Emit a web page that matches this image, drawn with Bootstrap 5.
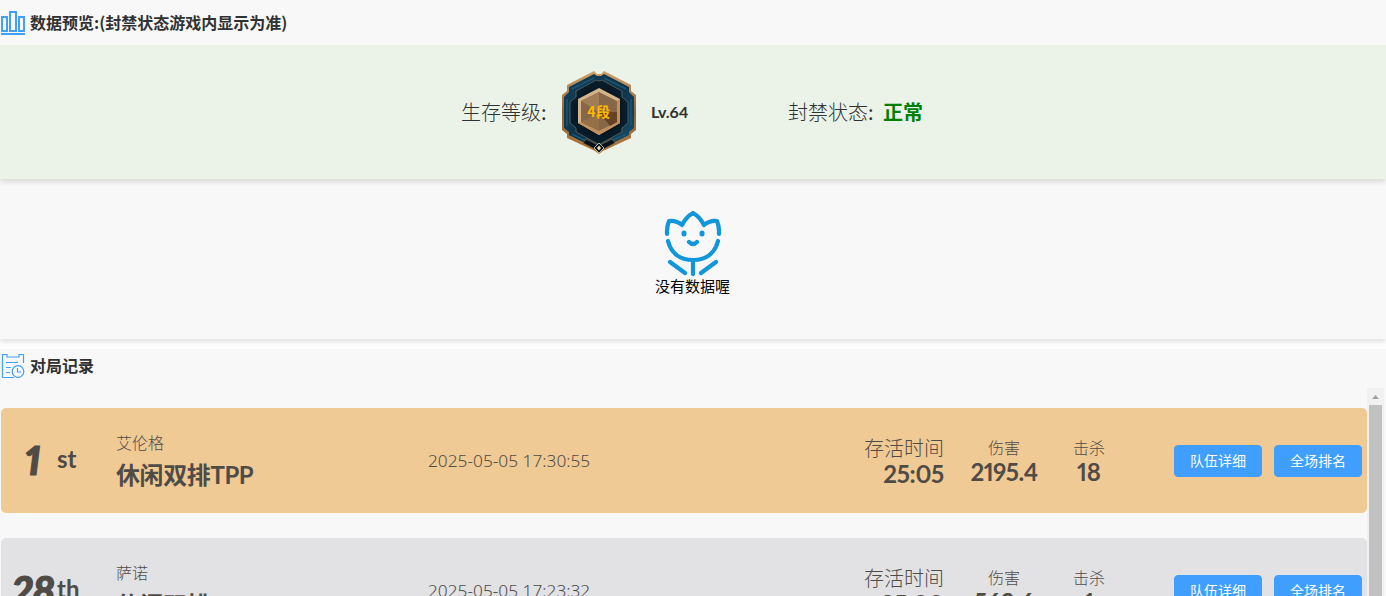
<!DOCTYPE html>
<html lang="zh-CN">
<head>
<meta charset="utf-8">
<title>数据预览</title>
<link href="https://cdn.jsdelivr.net/npm/bootstrap@5.3.0/dist/css/bootstrap.min.css" rel="stylesheet">
<style>
body{height:596px;overflow:hidden;background:#fff;color:#303133;font-family:"Noto Sans","Noto Sans CJK SC",sans-serif;font-size:16px;line-height:1}
.cjk{font-family:"Noto Sans CJK SC",sans-serif;white-space:nowrap}
.geo{font-family:Lato,"Noto Sans CJK SC",sans-serif;font-weight:700;white-space:nowrap;font-variant-numeric:proportional-nums}
.lt{font-weight:300}
.panel{background:#f8f8f8}
.shade{box-shadow:0 3px 5px rgba(0,0,0,.12);position:relative}
.title-bar{height:45px;padding:0 0 0 1px;gap:5px;position:relative;z-index:2}
.title-bar .cjk{font-size:16px;font-weight:700;line-height:24px;padding-bottom:2px}
.status{height:134px;background:#ebf3e8;z-index:1}
.s20{font-size:20px;line-height:24px}
.empty-box{height:160px;padding-top:32px;color:#000}
.empty-box .cjk{font-size:15px;line-height:20px;margin-right:1px}
.records{height:247px;margin-top:10px}
.list-wrap{height:208px}
.match{height:105px;margin-left:1px;border-radius:5px;color:#4f4b47;margin-bottom:25px}
.gold{background:#efca94}
.grey{background:#e2e2e4}
.rank{width:115px;padding-left:8px}
.rank-no{width:48px;font-size:40px;font-weight:900;font-style:italic;line-height:40px;-webkit-text-stroke:1.2px #4f4b47;padding-bottom:1px}
.rank-sfx{font-size:24px;line-height:24px;padding-bottom:4px}
.mode{width:312px;padding-top:4px}
.mode .geo{line-height:42px;letter-spacing:-.4px}
.date{width:400px;font-size:17.300px;font-weight:300;white-space:nowrap;padding-top:1px}
.v24{font-size:24px;line-height:24px;font-weight:700}
.alive{width:116px}
.alive .s20,.alive .v24{line-height:26px}
.alive .v24{letter-spacing:-.3px}
.dmg{width:120px;padding-bottom:3px}
.kill{width:50px;padding-bottom:3px}
.btn-act{width:88px;height:32px;padding:0 0 2px;border-radius:4px;background:#409eff;color:#fff;font-size:14px;line-height:28px;border:1px solid #409eff}
.sbar{width:17px;background:#f1f1f1;margin-right:2px}
.thumb{width:13px;background:#c1c1c1}
</style>
</head>
<body>
<div class="panel title-bar d-flex align-items-center">
<svg width="24" height="24" viewBox="0 0 24 24" fill="none" stroke="#409eff" stroke-width="2"><path d="M1 6H6V20H1ZM9 1H15V20H9ZM18 6H23V20H18ZM0 23H24"/></svg>
<span class="cjk">数据预览:(封禁状态游戏内显示为准)</span>
</div>
<div class="status shade d-flex align-items-center">
<div class="d-flex align-items-center" style="margin-left:461px">
<span class="cjk s20 lt" style="width:99px">生存等级<b>:</b></span>
<svg width="78" height="84" viewBox="0 0 78 84">
<defs>
<linearGradient id="rim" x2="0" y2="1"><stop offset="0" stop-color="#d0a068"/><stop offset=".5" stop-color="#8b663e"/><stop offset="1" stop-color="#b77a39"/></linearGradient>
<linearGradient id="blue" x2="1" y2="1"><stop offset="0" stop-color="#12405a"/><stop offset=".5" stop-color="#0d3349"/><stop offset="1" stop-color="#174f6b"/></linearGradient>
<radialGradient id="dark"><stop offset=".5" stop-color="#041019"/><stop offset="1" stop-color="#08202e"/></radialGradient>
</defs>
<path fill="url(#rim)" d="M34 1L37 4H41L44 1L71 15V21L76 25V60L71 64V68L43 81L39 84L35 81L7 68V64L2 60V25L7 21V15Z"/>
<path fill="url(#blue)" d="M34 4L37 6H41L44 4L69 17V22L74 27V58L69 62V65L39 80L9 65V62L4 58V27L9 22V17Z"/>
<path fill="none" stroke="#1c5673" stroke-width="1.500" d="M12 19L34 8M66 19L44 8M7 29V56M71 29V56M12 64L28 72M66 64L50 72"/>
<path fill="url(#dark)" stroke="#5f6460" stroke-width=".8" d="M36 10L39 11L42 10L62 21V27L68 32V53L62 58V62L40 74H38L16 62V58L10 53V32L16 27V21Z"/>
<path fill="#06131d" stroke="#8b6b44" stroke-width=".7" d="M26 69L38 75V81L23 73ZM52 69L40 75V81L55 73Z"/>
<path fill="#d6b48a" d="M39 18L60 29V53L39 65L18 53V29Z"/>
<path fill="#c48f5d" d="M18 53L39 65L60 53V29L57 31V52L39 61L21 52Z"/>
<path fill="#876747" d="M39 22L57 31V52L39 61L21 52V31Z"/>
<path fill="#a17e57" d="M39 22V42L21 31Z"/><path fill="#644325" d="M39 42L57 42V52L50 56Z"/><path fill="#937047" d="M39 42L21 52L39 61Z"/>
<path fill="#071720" stroke="#c2b49a" d="M39 73L44 78L39 83L34 78Z"/><path fill="#eee0c4" d="M39 75.500L41 78L39 80.500L37 78Z"/>
<text x="39" y="46.500" text-anchor="middle" font-family="Noto Sans CJK SC,sans-serif" font-size="14" font-weight="700" letter-spacing=".5" fill="#ffb800">4段</text>
</svg>
<span class="geo" style="margin-left:13px;width:137px;line-height:20px">Lv.64</span>
<span class="cjk s20 lt" style="width:95px">封禁状态<span style="font-weight:400">:</span></span>
<span class="cjk s20 fw-bold" style="color:#008000">正常</span>
</div>
</div>
<div class="panel shade empty-box d-flex flex-column align-items-center">
<svg width="58" height="65" viewBox="0 0 58 65" fill="none" stroke="#1296db" stroke-width="4.200" stroke-linecap="round" stroke-linejoin="round"><path d="M3 23V20Q3 15 5 10Q12 9 18 14Q22 6 29 2Q36 6 40 14Q46 9 53 10Q55 15 55 20V23M4 30C7 42 16 49 29 49S51 42 54 30M29 50V63M6 51L21 62M52 51L37 62M25 31Q29 35 33 31"/><path d="M20 22V23M38 22V23" stroke-width="5"/></svg>
<span class="cjk">没有数据喔</span>
</div>
<div class="panel records">
<div class="title-bar d-flex" style="height:39px;padding-top:4px">
<svg width="24" height="26" viewBox="0 0 24 26" fill="none" stroke="#409eff" stroke-width="1.200"><path d="M6 1.500H1.500V24.500H13M18 1.500H22.500V10M6 1V4H18V1M5 9.500H17M5 14.500H10M5 19.500H9"/><circle cx="17" cy="18.500" r="5.800"/><path d="M16.500 15V19H20"/></svg>
<span class="cjk">对局记录</span>
</div>
<div class="list-wrap d-flex overflow-hidden">
<div class="flex-grow-1" style="padding-top:20px">
<div class="match gold d-flex align-items-center">
<div class="rank d-flex align-items-center"><span class="geo rank-no text-center">1</span><span class="geo rank-sfx">st</span></div>
<div class="mode"><div class="cjk lt" style="line-height:24px">艾伦格</div><div class="v24 geo">休闲双排TPP</div></div>
<div class="date">2025-05-05 17:30:55</div>
<div class="alive text-end"><div class="cjk s20 lt">存活时间</div><div class="v24 geo">25:05</div></div>
<div class="dmg text-center"><div class="cjk lt" style="line-height:25px">伤害</div><div class="v24 geo" style="letter-spacing:-.5px">2195.4</div></div>
<div class="kill text-center"><div class="cjk lt" style="line-height:25px">击杀</div><div class="v24 geo">18</div></div>
<div class="d-flex ms-auto" style="gap:12px;margin-right:5px"><button class="btn btn-act cjk">队伍详细</button><button class="btn btn-act cjk">全场排名</button></div>
</div>
<div class="match grey d-flex align-items-center">
<div class="rank d-flex align-items-center"><span class="geo rank-no text-center" style="letter-spacing:-.5px">28</span><span class="geo rank-sfx">th</span></div>
<div class="mode"><div class="cjk lt" style="line-height:24px">萨诺</div><div class="v24 geo">休闲双排</div></div>
<div class="date">2025-05-05 17:23:32</div>
<div class="alive text-end"><div class="cjk s20 lt">存活时间</div><div class="v24 geo">25:00</div></div>
<div class="dmg text-center"><div class="cjk lt" style="line-height:25px">伤害</div><div class="v24 geo">562.6</div></div>
<div class="kill text-center"><div class="cjk lt" style="line-height:25px">击杀</div><div class="v24 geo">1</div></div>
<div class="d-flex ms-auto" style="gap:12px;margin-right:5px"><button class="btn btn-act cjk">队伍详细</button><button class="btn btn-act cjk">全场排名</button></div>
</div>
</div>
<div class="sbar d-flex flex-column align-items-center"><svg width="17" height="17" class="flex-shrink-0"><path d="M5 11L8.500 7L12 11Z" fill="#a3a3a3"/></svg><div class="thumb flex-grow-1"></div></div>
</div>
</div>
</body>
</html>
